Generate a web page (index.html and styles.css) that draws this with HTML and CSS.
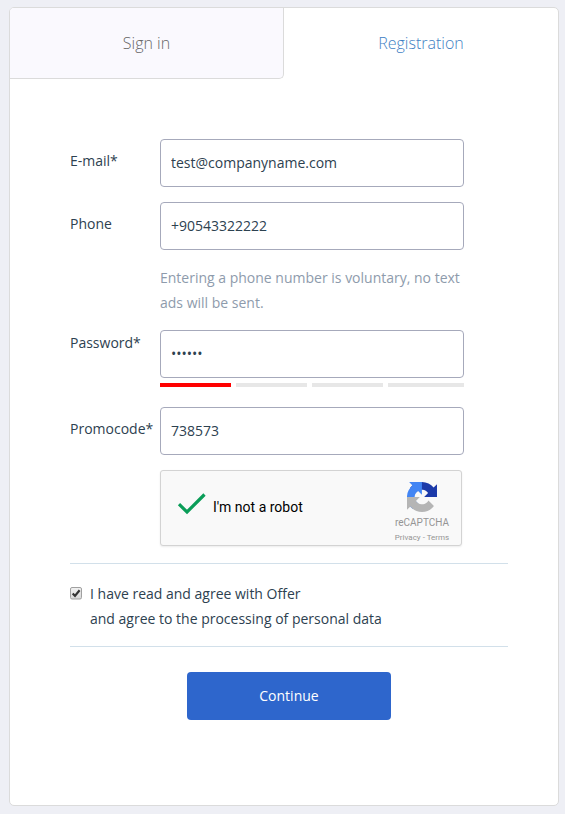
FILE: index.html
```html
<!DOCTYPE html>
<html lang="en">
<head>
<meta charset="utf-8">
<title>Registration</title>
<link rel="stylesheet" href="styles.css">
</head>
<body>
<main class="card">
  <nav class="tabs">
    <a class="tab tab-idle">Sign in</a>
    <a class="tab tab-active">Registration</a>
  </nav>
  <form class="form">
    <div class="row row-email">
      <label class="label" for="email">E-mail*</label>
      <input class="input" id="email" type="text" value="test@companyname.com">
    </div>
    <div class="row row-phone">
      <label class="label" for="phone">Phone</label>
      <div class="field">
        <input class="input" id="phone" type="text" value="+90543322222">
        <p class="hint">Entering a phone number is voluntary, no text ads will be sent.</p>
      </div>
    </div>
    <div class="row row-password">
      <label class="label label-password" for="password">Password*</label>
      <div class="field">
        <div class="input password" id="password">••••••</div>
        <div class="strength"><span class="bar bar-on"></span><span class="bar"></span><span class="bar"></span><span class="bar"></span></div>
      </div>
    </div>
    <div class="row">
      <label class="label" for="promo">Promocode*</label>
      <input class="input" id="promo" type="text" value="738573">
    </div>
    <div class="captcha">
      <svg class="tick" width="30" height="24" viewBox="0 0 30 24"><path d="M2 12.2 10 20 27.5 2.5" fill="none" stroke="#0a9d58" stroke-width="3.2"/></svg>
      <span class="captcha-text">I'm not a robot</span>
      <div class="brand">
        <svg class="logo" width="30" height="30" viewBox="0 0 64 64">
          <path fill="#1c3aa9" d="M64 31.955c-.001-.46-.012-.918-.032-1.373V4.64l-7.172 7.172C50.926 4.627 41.996.04 31.994.04 21.586.04 12.339 5.006 6.508 12.696l11.756 11.88a15.58 15.58 0 0 1 4.762-5.344c2.054-1.602 4.964-2.913 8.968-2.913.484 0 .857.057 1.132.163 4.961.392 9.262 3.13 11.794 7.104l-8.322 8.322L64 31.955"/>
          <path fill="#4285f4" d="M31.862.005c-.46.001-.917.012-1.371.032H4.548l7.172 7.172C4.534 13.079-.053 22.008-.053 32.01c0 10.408 4.966 19.655 12.656 25.486l11.88-11.756a15.58 15.58 0 0 1-5.343-4.762c-1.602-2.054-2.914-4.964-2.914-8.968 0-.484.057-.857.164-1.132.391-4.961 3.129-9.262 7.103-11.794l8.323 8.322L31.862.005"/>
          <path fill="#b5b5b5" d="M.001 32.045c.001.46.012.917.032 1.373V59.36l7.172-7.172c5.87 7.185 14.8 11.772 24.802 11.772 10.408 0 19.655-4.966 25.486-12.656l-11.756-11.88a15.58 15.58 0 0 1-4.762 5.344c-2.054 1.602-4.964 2.914-8.968 2.914-.484 0-.857-.057-1.132-.164-4.961-.391-9.262-3.129-11.794-7.103l8.322-8.323L.001 32.045"/>
        </svg>
        <span class="brand-name">reCAPTCHA</span>
        <span class="brand-links">Privacy - Terms</span>
      </div>
    </div>
    <div class="consent">
      <svg class="check" width="12" height="13" viewBox="0 0 12 13">
        <defs><linearGradient id="face" x1="0" y1="0" x2="0" y2="1"><stop offset="0" stop-color="#f2f2f2"/><stop offset="1" stop-color="#d6d6d6"/></linearGradient></defs>
        <rect x=".5" y=".5" width="11" height="11.5" rx="1.5" fill="url(#face)" stroke="#a0a0a0"/>
        <path d="M2.7 6.5 5 8.9 9.6 3.2" fill="none" stroke="#333" stroke-width="2.2"/>
      </svg>
      <p class="consent-text">I have read and agree with Offer<br>and agree to the processing of personal data</p>
    </div>
    <button class="submit" type="button">Continue</button>
  </form>
</main>
</body>
</html>
```
FILE: styles.css
```css
* { box-sizing: border-box; }
html { background: #fff; }
body {
  width: 565px;
  height: 814px;
  margin: 0;
  padding: 7px 6px 8px 9px;
  background: #eeeff5;
  color: #2d4150;
  font: 14px/25px "Open Sans", sans-serif;
  overflow: hidden;
}
p { margin: 0; }
.card {
  height: 799px;
  background: #fff;
  border: 1px solid #dbdbdb;
  border-radius: 5px;
  overflow: hidden;
}
.tabs { display: flex; height: 71px; }
.tab {
  flex: 1;
  text-align: center;
  font-size: 16px;
  font-weight: 300;
  line-height: 70px;
}
.tab-idle {
  flex: 0 0 274px;
  color: #666;
  background: #faf9fe;
  border: solid #dbdbdb;
  border-width: 0 1px 1px 0;
  border-bottom-right-radius: 5px;
}
.tab-active { color: #3f7fc4; }
.form { padding: 60px 50px 0 60px; }
.row { display: flex; margin-bottom: 15px; }
.label { width: 90px; padding-top: 9px; flex: none; }
.label-password { padding-top: 0; }
.field { width: 304px; }
.input {
  display: block;
  width: 304px;
  height: 48px;
  padding: 0 10px 2px;
  border: 1px solid #a6a9bb;
  border-radius: 4px;
  background: #fff;
  color: #2d4150;
  font: inherit;
  outline: none;
}
.hint { margin-top: 15px; color: #8e9bac; }
.password { font-size: 14px; line-height: 45px; }
.strength {
  display: grid;
  grid-template-columns: 71px 71px 71px 76px;
  column-gap: 5px;
  height: 4px;
  margin: 5px 0;
}
.bar { background: #e7e7e7; }
.bar-on { background: #f00; }
.captcha {
  display: flex;
  width: 302px;
  height: 76px;
  margin-left: 90px;
  padding-left: 16px;
  background: #f9f9f9;
  border: 1px solid #d3d3d3;
  border-radius: 3px;
  box-shadow: 0 1px 2px rgba(0, 0, 0, .08);
  color: #000;
  font: 14px/17px Roboto, sans-serif;
}
.tick { margin-top: 21px; }
.captcha-text { margin: 28px 0 0 6px; }
.brand {
  display: flex;
  flex-direction: column;
  align-items: center;
  width: 70px;
  margin: 11px 4px 0 auto;
  color: #959595;
}
.brand-name { margin-top: 5px; font-size: 10px; line-height: 12px; }
.brand-links { margin-top: 4px; font-size: 8px; line-height: 10px; white-space: nowrap; }
.consent {
  display: flex;
  height: 84px;
  margin-top: 17px;
  padding-top: 17px;
  border: solid #d2e0ea;
  border-width: 1px 0;
}
.check { margin: 6px 8px 0 0; }
.submit {
  display: block;
  width: 204px;
  height: 48px;
  margin: 25px 0 0 117px;
  padding: 0 0 2px;
  border: 0;
  border-radius: 4px;
  background: #2e66cc;
  color: #fff;
  font: inherit;
}
```
